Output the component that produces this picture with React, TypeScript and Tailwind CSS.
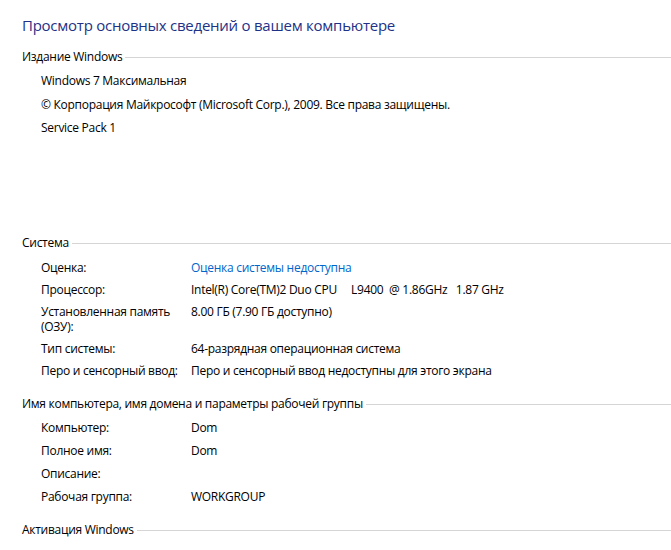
import type { ReactNode } from 'react'

const font = { fontFamily: '"Open Sans", "Noto Sans", sans-serif' }

function SectionHeader({ title, className }: { title: string; className?: string }) {
  return (
    <div className={`flex items-center leading-[15px] ${className ?? ''}`}>
      <span className="whitespace-nowrap">{title}</span>
      <div className="ml-[3px] h-px flex-1 bg-[#d5d5d5] translate-y-[1px]" />
    </div>
  )
}

function Row({ label, children }: { label: ReactNode; children?: ReactNode }) {
  return (
    <div className="grid grid-cols-[150px_1fr] leading-[15px]">
      <div>{label}</div>
      <div className="whitespace-pre">{children}</div>
    </div>
  )
}

export default function App() {
  return (
    <div
      className="w-[671px] h-[550px] overflow-hidden bg-white pl-[22px] pt-[14px] text-[12px] tracking-[-0.28px] text-black"
      style={font}
    >
      <h1 className="text-[15px] leading-[22px] tracking-[-0.25px] text-[#1e3287]">
        Просмотр основных сведений о вашем компьютере
      </h1>

      <SectionHeader title="Издание Windows" className="mt-[13px]" />
      <div className="mt-[9px] flex flex-col gap-[8.5px] pl-[19px] leading-[15px]">
        <div>Windows 7 Максимальная</div>
        <div>© Корпорация Майкрософт (Microsoft Corp.), 2009. Все права защищены.</div>
        <div>Service Pack 1</div>
      </div>

      <SectionHeader title="Система" className="mt-[100px]" />
      <div className="mt-[10px] flex flex-col gap-[7px] pl-[19px]">
        <Row label="Оценка:">
          <span className="text-[#0066cc]">Оценка системы недоступна</span>
        </Row>
        <Row label="Процессор:">Intel(R) Core(TM)2 Duo CPU     L9400  @ 1.86GHz   1.87 GHz</Row>
        <Row label={<>Установленная память<br />(ОЗУ):</>}>8.00 ГБ (7.90 ГБ доступно)</Row>
        <Row label="Тип системы:">64-разрядная операционная система</Row>
        <Row label="Перо и сенсорный ввод:">Перо и сенсорный ввод недоступны для этого экрана</Row>
      </div>

      <SectionHeader
        title="Имя компьютера, имя домена и параметры рабочей группы"
        className="mt-[18px]"
      />
      <div className="mt-[9px] flex flex-col gap-[8px] pl-[19px]">
        <Row label="Компьютер:">Dom</Row>
        <Row label="Полное имя:">Dom</Row>
        <Row label="Описание:" />
        <Row label="Рабочая группа:">WORKGROUP</Row>
      </div>

      <SectionHeader title="Активация Windows" className="mt-[18px]" />
    </div>
  )
}
